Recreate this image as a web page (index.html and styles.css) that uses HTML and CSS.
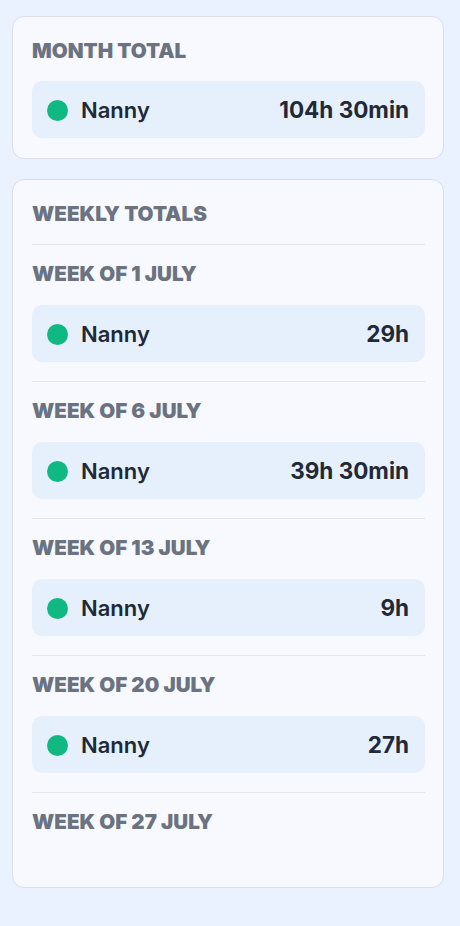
FILE: index.html
```html
<!DOCTYPE html>
<html>
<head>
<meta charset="utf-8">
<link rel="stylesheet" href="styles.css">
</head>
<body>
<main class="page">
  <section class="card">
    <h2 class="card-title">Month total</h2>
    <div class="row"><span class="dot"></span><span class="name">Nanny</span><span class="value">104h 30min</span></div>
  </section>

  <section class="card">
    <h2 class="card-title card-title--sep">Weekly totals</h2>
    <div class="week">
      <h3 class="week-title">Week of 1 July</h3>
      <div class="row"><span class="dot"></span><span class="name">Nanny</span><span class="value">29h</span></div>
    </div>
    <div class="week">
      <h3 class="week-title">Week of 6 July</h3>
      <div class="row"><span class="dot"></span><span class="name">Nanny</span><span class="value">39h 30min</span></div>
    </div>
    <div class="week">
      <h3 class="week-title">Week of 13 July</h3>
      <div class="row"><span class="dot"></span><span class="name">Nanny</span><span class="value">9h</span></div>
    </div>
    <div class="week">
      <h3 class="week-title">Week of 20 July</h3>
      <div class="row"><span class="dot"></span><span class="name">Nanny</span><span class="value">27h</span></div>
    </div>
    <div class="week week--empty">
      <h3 class="week-title">Week of 27 July</h3>
    </div>
  </section>
</main>
</body>
</html>
```

FILE: styles.css
```css
* { box-sizing: border-box; }
html, body { margin: 0; padding: 0; }
body {
  background: #e9f2fe;
  font-family: Inter, "Noto Sans", sans-serif;
  color: #1f2937;
}
.page {
  padding: 16px 16px 16px 12px;
  display: flex;
  flex-direction: column;
  gap: 20px;
}
.card {
  background: #f7f9fe;
  border: 1px solid #d9dee7;
  border-radius: 12px;
  padding: 20px 18px 20px 19px;
}
.card-title, .week-title {
  margin: 0;
  font-size: 20.6px;
  line-height: 28px;
  font-weight: 900;
  color: #6b7280;
  text-transform: uppercase;
  letter-spacing: 0;
}
.card-title { margin-bottom: 16px; }
.week {
  border-top: 1px solid #e0e4eb;
  padding: 15px 0 19px;
}
.week-title { margin-bottom: 17px; }
.week--empty { padding-bottom: 31px; }
.week--empty .week-title { margin-bottom: 0; }
.row {
  display: flex;
  align-items: center;
  height: 57px;
  padding: 0 16px 0 15px;
  background: #e6f0fd;
  border-radius: 10px;
}
.dot {
  width: 21px;
  height: 21px;
  border-radius: 50%;
  background: #10b981;
  flex: none;
  margin-top: 2px;
}
.name {
  margin-left: 13px;
  font-size: 22px;
  font-weight: 600;
  flex: 1;
}
.value {
  font-size: 22.5px;
  font-weight: 700;
}
```
